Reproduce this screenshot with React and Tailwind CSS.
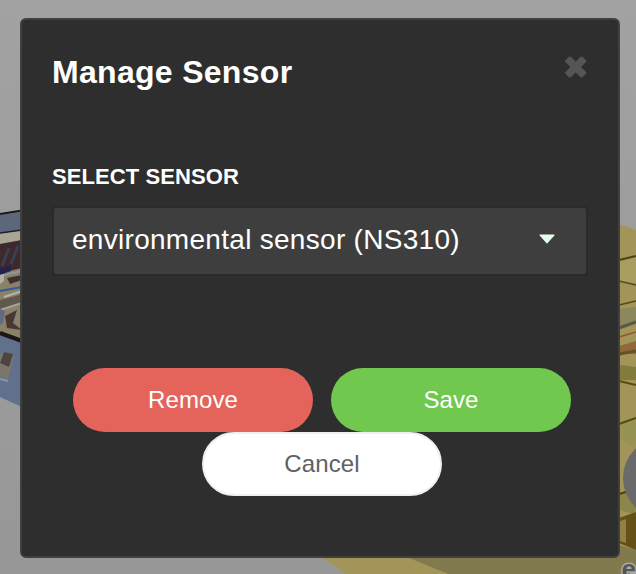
function Backdrop() {
  return (
    <svg className="absolute inset-0 h-full w-full" viewBox="0 0 636 574" preserveAspectRatio="none" aria-hidden="true">
      <defs>
        <linearGradient id="wall" x1="0" y1="0" x2="0" y2="1">
          <stop offset="0" stopColor="#a2a2a2" />
          <stop offset="1" stopColor="#979797" />
        </linearGradient>
      </defs>
      <rect width="636" height="574" fill="url(#wall)" />

      <g>
        <path d="M0 215L22 210V342L0 334Z" fill="#8b8168" />
        <path d="M0 215L22 212V230L0 234Z" fill="#5c677b" />
        <path d="M0 214L22 210.500" stroke="#17181d" strokeWidth="2" />
        <path d="M0 233L22 230" stroke="#20202a" strokeWidth="1.500" />
        <path d="M0 234L22 231V240L0 244Z" fill="#a8a595" />
        <path d="M0 244L22 240V268L0 273Z" fill="#40292e" />
        <path d="M2 266L9 248M11 264L18 246" stroke="#354253" strokeWidth="3" />
        <path d="M0 268L11 266V271L0 275Z" fill="#24244a" />
        <path d="M0 276L22 271" stroke="#8e969e" strokeWidth="2" />
        <path d="M7 278L22 275V280L10 284Z" fill="#3f3030" />
        <path d="M0 275L4 274V281L0 284Z" fill="#b3b0aa" />
        <path d="M0 291L22 287" stroke="#315a98" strokeWidth="2" />
        <path d="M4 297L22 291" stroke="#b5b4a8" strokeWidth="2" />
        <path d="M0 300L12 297L22 294V302L0 309Z" fill="#61584c" />
        <path d="M0 310L22 303" stroke="#a2a39e" strokeWidth="2" />
        <path d="M5 316L17 310L13 323L22 330L7 328Z" fill="#493832" />
        <path d="M0 309L5 311L3 323L0 325Z" fill="#656882" />
        <path d="M0 334L22 342V407L0 397Z" fill="#60708d" />
        <path d="M0 333L22 341" stroke="#191614" strokeWidth="4" />
        <path d="M3 352L14 355L8 379L0 376V356Z" fill="#7c7768" />
        <path d="M4 352L13 354L9 367L0 363Z" fill="#4e4540" />
        <path d="M0 379L8 381" stroke="#8998a8" strokeWidth="2" />
      </g>

      <g>
        <path d="M619 224L636 230V574H345L320 556L619 550Z" fill="#a39459" />
        <path d="M619 262L636 257V283L619 281Z" fill="#a99d60" />
        <path d="M619 260L636 256" stroke="#51420f" strokeWidth="2" />
        <path d="M619 281L636 285M619 305L636 301" stroke="#56491b" strokeWidth="1.500" />
        <path d="M619 309L636 307V324L619 328Z" fill="#8c875c" />
        <path d="M619 328L636 322" stroke="#585a45" strokeWidth="3" />
        <path d="M619 337L636 332" stroke="#8b5a30" strokeWidth="1.500" />
        <path d="M619 346L636 341V354L619 353Z" fill="#91683b" />
        <path d="M619 354L636 351" stroke="#665028" strokeWidth="3" />
        <path d="M619 365L636 367V380H619Z" fill="#827b3c" />
        <path d="M619 381L636 385" stroke="#5b4a19" strokeWidth="2" />
        <path d="M619 424L636 418V448L619 438Z" fill="#969354" />
        <path d="M619 424L636 418" stroke="#57491a" strokeWidth="2" />
        <path d="M619 494L636 488V515L619 510Z" fill="#8c864a" />
        <path d="M619 494L636 489" stroke="#523f10" strokeWidth="2" />
        <path d="M619 518L636 512V550L619 543Z" fill="#655019" />
        <path d="M620 521L626 519V543L620 541Z" fill="#918047" />
        <path d="M407 557L619 545L636 550V574H448Z" fill="#807a4d" />
        <circle cx="664" cy="478" r="41" fill="#696a69" />
      </g>
      <text x="621.500" y="577.500" fontSize="26" fontWeight="700" fill="#565656" stroke="#aaaaaa" strokeWidth="3" paintOrder="stroke">e</text>
    </svg>
  );
}

function PillButton({ className, children }) {
  return (
    <button type="button" className={`h-16 w-60 rounded-full text-2xl leading-none ${className}`}>
      {children}
    </button>
  );
}

export default function App() {
  return (
    <main className="relative h-[574px] w-[636px] overflow-hidden px-[20px] pt-[18px] font-['Liberation_Sans',Arial,sans-serif]">
      <Backdrop />
      <section role="dialog" aria-label="Manage Sensor" className="relative h-[540px] w-[600px] rounded-[6px] border-2 border-[#404040] bg-[#2e2e2e] px-[30px]">
        <header className="flex h-[90px] items-start justify-between pt-[34px]">
          <h1 className="text-[32px] leading-[36px] font-bold tracking-[0.3px] text-white">Manage Sensor</h1>
          <button type="button" aria-label="Close" className="mt-[2px] mr-[1px]">
            <svg width="22" height="22" viewBox="0 0 22 22" fill="#555555">
              <g transform="translate(10.700 11) rotate(45)">
                <rect x="-12" y="-3.800" width="24" height="7.600" rx="1.600" />
                <rect x="-3.800" y="-12" width="7.600" height="24" rx="1.600" />
              </g>
            </svg>
          </button>
        </header>
        <div className="pt-[55px]">
          <h2 className="text-[22px] leading-[24px] font-bold tracking-[0.08px] text-white">SELECT SENSOR</h2>
          <button type="button" className="mt-[17px] flex h-[70px] w-[536px] items-center justify-between rounded-[4px] border-2 border-[#2a2a2a] bg-[#3e3e3e] pr-[31px] pb-[3px] pl-[18px] text-[28px] tracking-[0.29px] text-white">
            <span className="pt-px">environmental sensor (NS310)</span>
            <svg className="mb-px" width="16" height="10" viewBox="0 0 16 10" fill="#e6ffec">
              <path d="M1 .5H15Q16 .5 15.300 1.400L8.700 9Q8 9.800 7.300 9L.7 1.400Q0 .5 1 .5Z" />
            </svg>
          </button>
        </div>
        <div className="mt-[92px] flex flex-wrap justify-center gap-x-[18px] pl-[4px]">
          <PillButton className="bg-[#e4645b] tracking-[0.1px] text-white">Remove</PillButton>
          <PillButton className="bg-[#71c84e] tracking-[0.1px] text-white">Save</PillButton>
          <PillButton className="border-2 border-[#efefef] bg-white tracking-[0.1px] text-[#606162]">Cancel</PillButton>
        </div>
      </section>
    </main>
  );
}
